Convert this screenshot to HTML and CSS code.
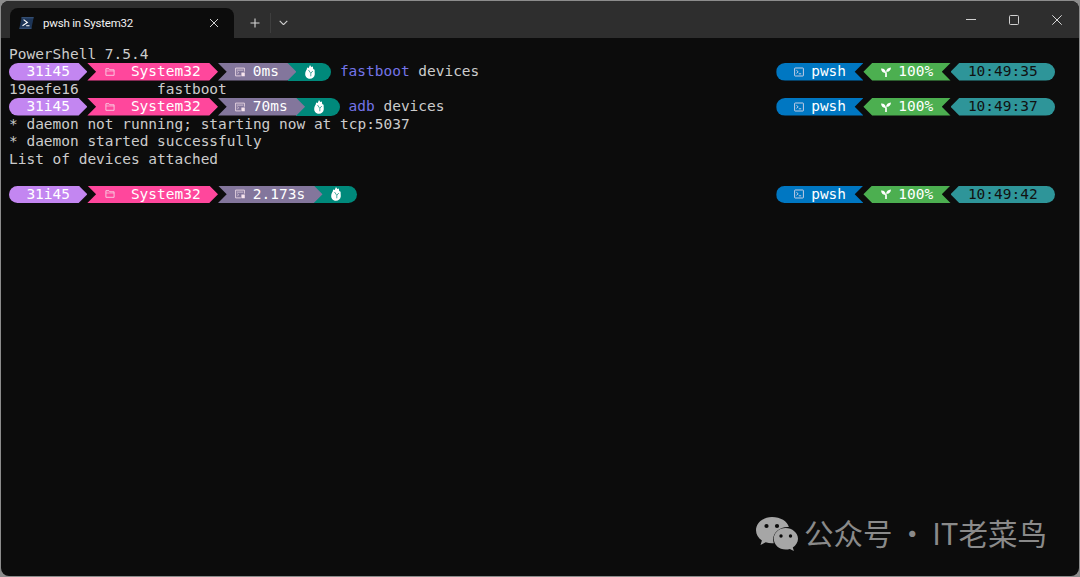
FILE: index.html
```html
<!DOCTYPE html>
<html lang="en">
<head>
<meta charset="utf-8">
<title>pwsh in System32</title>
<link rel="stylesheet" href="styles.css">
</head>
<body>
<svg class="defs" width="0" height="0" aria-hidden="true">
  <defs>
    <symbol id="i-folder" viewBox="0 0 10 10"><path d="M.9 1.700h3l1 1.100h4.200v5.500H.9z" fill="none" stroke="currentColor" stroke-width=".8"/><path d="M.9 4h8.200" stroke="currentColor" stroke-width=".6"/></symbol>
    <symbol id="i-exec" viewBox="0 0 10 10"><path d="M.6 1.100h8.800v3.600M5.800 8.900H.6V1.100" fill="none" stroke="currentColor" stroke-width=".8"/><path d="M1.800 3.100h6.400M2.300 4.700l1.300 1.100-1.300 1.100" fill="none" stroke="currentColor" stroke-width=".7"/><path d="M6.400 5.400h3.400v3.800H6.400z" fill="currentColor"/></symbol>
    <symbol id="i-hand" viewBox="0 0 10 14"><path d="M5 .1 6.300 2 7.900 1.500 8.200 4l1.400.8.200 4.400C9.500 12 7.500 13.800 5 13.800 2.400 13.800.2 11.800.2 9.200.2 7.400.8 5.800 1.600 4.800L2.200 2.400 3.700 3z" fill="currentColor"/><path d="M3.500 5 5.800 8.300 7.800 6M5.800 8.300v3" fill="none" stroke="#00897b" stroke-width=".7"/></symbol>
    <symbol id="i-term" viewBox="0 0 10 10"><rect x=".6" y="1" width="8.800" height="8" rx=".6" fill="none" stroke="currentColor" stroke-width=".8"/><path d="M2.400 3.300 4.200 4.800 2.400 6.300M4.800 6.800h2.400" fill="none" stroke="currentColor" stroke-width=".8"/></symbol>
    <symbol id="i-sprout" viewBox="0 0 10 10"><path d="M5 9.900V5.200" stroke="currentColor" stroke-width="1.700" fill="none"/><path d="M5 6C2.200 6 .2 4.500 0 1.400 3.100 1.200 4.900 3 5 6zM5 4.800C5.200 2.400 7 .6 10 .4 9.800 3.400 7.800 5 5 4.800z" fill="currentColor"/></symbol>
  </defs>
</svg>
<div class="window">
  <header class="titlebar">
    <div class="tab">
      <svg class="tab-icon" viewBox="0 0 15 12" aria-hidden="true"><path d="M2.600.3h12.100l-2.300 11.400H.3z" fill="#1d3557"/><path d="M2.600.3h12.100l-.2 1H2.400zM.5 10.700h12.100l-.2 1H.3z" fill="#3c5a80"/><path d="M4.600 2.600 8.400 5.500 3.500 8.700" fill="none" stroke="#fff" stroke-width="1.100"/><path d="M7.200 8.800h3.300" stroke="#fff" stroke-width="1.100"/></svg>
      <span class="tab-title">pwsh in System32</span>
      <svg class="tab-close" viewBox="0 0 10 10" aria-hidden="true"><path d="M1 1l8 8M9 1l-8 8" stroke="#d0d0d0" stroke-width="1" fill="none"/></svg>
    </div>
    <div class="new-tab">
      <svg class="plus" viewBox="0 0 10 10" aria-hidden="true"><path d="M5 .5v9M.5 5h9" stroke="#d8d8d8" stroke-width="1.100" fill="none"/></svg>
      <span class="divider"></span>
      <svg class="chev" viewBox="0 0 8 5" aria-hidden="true"><path d="M.6.8 4 4.200 7.400.8" stroke="#d0d0d0" stroke-width="1" fill="none"/></svg>
    </div>
    <div class="controls">
      <svg class="ctl" viewBox="0 0 10 10" aria-hidden="true"><path d="M0 4.500h10" stroke="#d0d0d0" stroke-width="1"/></svg>
      <svg class="ctl" viewBox="0 0 10 10" aria-hidden="true"><rect x=".5" y=".5" width="9" height="9" rx="1" stroke="#d0d0d0" stroke-width="1" fill="none"/></svg>
      <svg class="ctl" viewBox="0 0 10 10" aria-hidden="true"><path d="M.3.300l9.400 9.400M9.700.300.3 9.700" stroke="#d8d8d8" stroke-width="1" fill="none"/></svg>
    </div>
  </header>
  <main class="term">
    <div class="line">PowerShell 7.5.4</div>

    <div class="line prompt">
      <span class="seg s-user">31i45</span>
      <span class="seg s-path"><svg class="ico"><use href="#i-folder"/></svg><span class="gap2">System32</span></span>
      <span class="seg s-time"><svg class="ico"><use href="#i-exec"/></svg><span class="gap1">0ms</span></span>
      <span class="seg s-hand"><svg class="ico hand"><use href="#i-hand"/></svg></span>
      <span class="cmd"><span class="exe">fastboot</span> devices</span>
      <span class="right">
        <span class="seg s-shell"><svg class="ico"><use href="#i-term"/></svg><span class="gap1">pwsh</span></span>
        <span class="seg s-bat"><svg class="ico"><use href="#i-sprout"/></svg><span class="gap1">100%</span></span>
        <span class="seg s-clock">10:49:35</span>
      </span>
    </div>

    <div class="line">19eefe16         fastboot</div>

    <div class="line prompt">
      <span class="seg s-user">31i45</span>
      <span class="seg s-path"><svg class="ico"><use href="#i-folder"/></svg><span class="gap2">System32</span></span>
      <span class="seg s-time"><svg class="ico"><use href="#i-exec"/></svg><span class="gap1">70ms</span></span>
      <span class="seg s-hand"><svg class="ico hand"><use href="#i-hand"/></svg></span>
      <span class="cmd"><span class="exe">adb</span> devices</span>
      <span class="right">
        <span class="seg s-shell"><svg class="ico"><use href="#i-term"/></svg><span class="gap1">pwsh</span></span>
        <span class="seg s-bat"><svg class="ico"><use href="#i-sprout"/></svg><span class="gap1">100%</span></span>
        <span class="seg s-clock">10:49:37</span>
      </span>
    </div>

    <div class="line">* daemon not running; starting now at tcp:5037</div>
    <div class="line">* daemon started successfully</div>
    <div class="line">List of devices attached</div>
    <div class="line"></div>

    <div class="line prompt">
      <span class="seg s-user">31i45</span>
      <span class="seg s-path"><svg class="ico"><use href="#i-folder"/></svg><span class="gap2">System32</span></span>
      <span class="seg s-time"><svg class="ico"><use href="#i-exec"/></svg><span class="gap1">2.173s</span></span>
      <span class="seg s-hand"><svg class="ico hand"><use href="#i-hand"/></svg></span>
      <span class="right">
        <span class="seg s-shell"><svg class="ico"><use href="#i-term"/></svg><span class="gap1">pwsh</span></span>
        <span class="seg s-bat"><svg class="ico"><use href="#i-sprout"/></svg><span class="gap1">100%</span></span>
        <span class="seg s-clock">10:49:42</span>
      </span>
    </div>
  </main>
  <aside class="watermark">
    <svg class="wechat" viewBox="0 0 42 34" aria-hidden="true">
      <path d="M16 0C7.200 0 0 5.900 0 13.200c0 4.200 2.300 7.800 5.900 10.200L4.500 28l5.200-2.700c2 .6 4.100 1 6.300 1 .6 0 1.200 0 1.800-.1-.4-1.200-.6-2.500-.6-3.800C17.200 15.600 23.500 10 31.400 10c.6 0 1.100 0 1.500.1C31.400 4.300 24.500 0 16 0z" fill="#a6a6a6"/>
      <path d="M42 21.800C42 15.800 36.100 11 29.700 11 23 11 17.800 15.800 17.800 21.800S23 32.600 29.700 32.600c1.500 0 2.800-.3 4.200-.7l4 2.100-1.100-3.500C40 28.300 42 25.300 42 21.800z" fill="#a6a6a6"/>
      <circle cx="10.500" cy="9" r="2.100" fill="#0c0c0c"/><circle cx="21" cy="9" r="2.100" fill="#0c0c0c"/>
      <circle cx="25" cy="19" r="1.700" fill="#0c0c0c"/><circle cx="34.500" cy="19" r="1.700" fill="#0c0c0c"/>
    </svg>
    <span class="wm-text">公众号 · IT老菜鸟</span>
  </aside>
</div>
</body>
</html>
```

FILE: styles.css
```css
* { box-sizing: border-box; }
html, body { margin: 0; height: 100%; overflow: hidden; background: #8c8c8c; }
.defs { display: block; height: 0; }

.window {
  position: relative;
  display: flex;
  flex-direction: column;
  height: 575px;
  margin: 1px 1px 1px 1px;
  border-radius: 8px;
  background: #0c0c0c;
  overflow: hidden;
}

.titlebar {
  flex: 0 0 37px;
  display: flex;
  align-items: flex-end;
  background: #2e2e2e;
  color: #fff;
}
.tab {
  display: flex;
  align-items: center;
  width: 224px;
  height: 30px;
  margin-left: 9px;
  padding: 0 15px 0 9px;
  background: #0c0c0c;
  border-radius: 8px 8px 0 0;
}
.tab-icon { width: 15px; height: 12px; flex: none; }
.tab-title {
  margin-left: 9px;
  font: 11.5px/16px Roboto, "Liberation Sans", sans-serif;
  letter-spacing: -0.2px;
  color: #f2f2f2;
  flex: 1;
}
.tab-close { width: 10px; height: 10px; flex: none; }
.new-tab {
  display: flex;
  align-items: center;
  align-self: stretch;
  padding: 6px 0 0 16px;
}
.plus { width: 10px; height: 10px; }
.divider { width: 1px; height: 20px; margin: 0 8px 0 10px; background: #3e3e3e; }
.chev { width: 9px; height: 5.600px; }
.controls {
  margin-left: auto;
  align-self: stretch;
  display: flex;
  align-items: center;
  gap: 33px;
  padding: 0 17px 0 0;
}
.ctl { width: 10px; height: 10px; }

.term {
  flex: 1;
  padding: 7.5px 24px 0 8px;
  font-family: "DejaVu Sans Mono", monospace;
  font-size: 14.47px;
  color: #cccccc;
}
.line {
  height: 17.5px;
  line-height: 17.5px;
  white-space: pre;
}
.prompt { display: flex; align-items: stretch; }

.seg {
  display: flex;
  align-items: center;
  height: 17.5px;
  padding: 0 2ch;
  color: #fff;
}
.ico { width: 10px; height: 10px; margin-right: calc(1ch - 10px); flex: none; color: #f7e4ee; }
.gap1 { margin-left: 1ch; }
.gap2 { margin-left: 2ch; }

.s-user {
  background: #c386f1;
  border-radius: 9px 0 0 9px;
  clip-path: polygon(0 0, calc(100% - 1ch) 0, 100% 50%, calc(100% - 1ch) 100%, 0 100%);
}
.s-path {
  background: #ff479c;
  clip-path: polygon(0 0, calc(100% - 1ch) 0, 100% 50%, calc(100% - 1ch) 100%, 0 100%, 1ch 50%);
}
.s-time {
  background: #83769c;
  z-index: 1;
  clip-path: polygon(0 0, calc(100% - 1ch) 0, 100% 50%, calc(100% - 1ch) 100%, 0 100%, 1ch 50%);
}
.s-hand {
  background: #00897b;
  margin-left: -1ch;
  border-radius: 0 9px 9px 0;
}
.ico.hand { height: 14px; color: #fff; }
.cmd { margin-left: 1ch; }
.exe { color: #7474e8; }

.right { display: flex; margin-left: auto; }
.s-shell {
  background: #0077c2;
  border-radius: 9px 0 0 9px;
  clip-path: polygon(0 0, 100% 0, calc(100% - 1ch) 50%, 100% 100%, 0 100%);
}
.s-bat {
  background: #4caf50;
  clip-path: polygon(1ch 0, 100% 0, calc(100% - 1ch) 50%, 100% 100%, 1ch 100%, 0 50%);
}
.s-bat .ico { color: #fff; }
.s-clock {
  background: #2e9599;
  color: #111111;
  border-radius: 0 9px 9px 0;
  clip-path: polygon(1ch 0, 100% 0, 100% 100%, 1ch 100%, 0 50%);
}

.watermark {
  position: absolute;
  left: 755px;
  top: 513px;
  display: flex;
  align-items: flex-start;
  gap: 6px;
}
.wechat { width: 42px; height: 34px; margin-top: 3px; flex: none; }
.wm-text {
  font-family: "Noto Sans CJK SC", sans-serif;
  font-size: 29.5px;
  line-height: 36px;
  word-spacing: -1.5px;
  color: #8a8a8a;
  white-space: nowrap;
}
```
